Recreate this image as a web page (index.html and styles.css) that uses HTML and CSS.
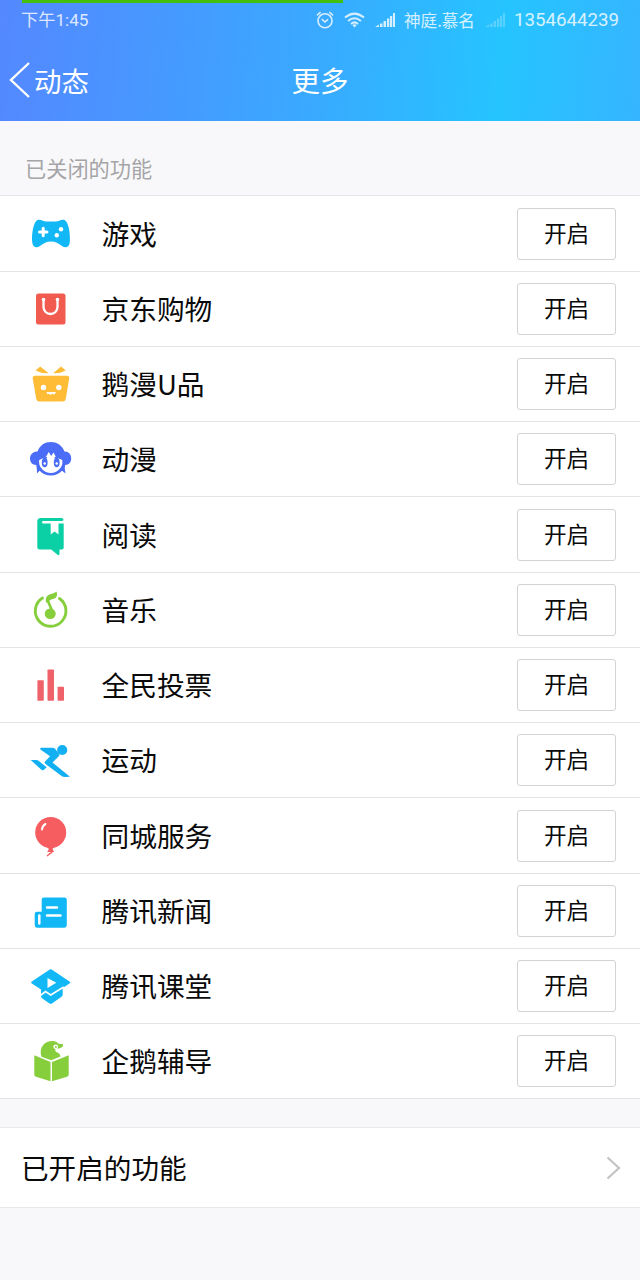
FILE: index.html
```html
<!DOCTYPE html>
<html lang="zh-CN">
<head>
    <meta charset="UTF-8">
    <meta name="viewport" content="width=device-width, initial-scale=1.0">
    <title>更多</title>
    <link rel="stylesheet" href="styles.css">
</head>

<body>
    <header class="header">
        <div class="progress"></div>
        <div class="status">
            <span class="time">下午1:45</span>
            <svg class="alarm" viewBox="0 0 18 18" fill="none" stroke="#fff" stroke-width="1.6">
                <circle cx="9" cy="9.8" r="7"/>
                <path d="M5.8 8.2L9 11l3-2.6M1 4.3L4.6 1.2M17 4.3l-3.6-3.1"/>
            </svg>
            <svg class="wifi" viewBox="0 0 21 16" fill="none" stroke="#fff" stroke-width="2">
                <path d="M1 5.6q9.500-8 19 0M4.100 8.900q6.400-5.400 12.800 0M7 11.900q3.500-3 7 0"/>
                <path d="M8.300 13q2.200-1.600 4.400 0l-2.200 2.400z" fill="#fff" stroke="none"/>
            </svg>
            <svg class="signal" viewBox="0 0 20 15" fill="#fff">
                <path d="M0 14l4-2.500V14zM5 10.500h2.500V14H5zM8.500 8H11v6H8.500zM12 5.500h2.300V14H12zM15 3h2.200v11H15zM18 0h2v14h-2z"/>
            </svg>
            <span class="carrier">神庭.慕名</span>
            <svg class="signal weak" viewBox="0 0 20 15" fill="#fff">
                <path d="M0 14l4-2.500V14zM5 10.500h2.500V14H5zM8.500 8H11v6H8.500zM12 5.500h2.300V14H12zM15 3h2.200v11H15zM18 0h2v14h-2z"/>
            </svg>
            <span class="number">1354644239</span>
        </div>
        <nav class="nav">
            <a class="back">
                <svg viewBox="0 0 22 36" fill="none" stroke="#fff" stroke-width="2.400"><path d="M20 1L2 18l18 17"/></svg>
                <span>动态</span>
            </a>
            <h1>更多</h1>
        </nav>
    </header>

    <h2 class="caption">已关闭的功能</h2>

    <ul class="list">
        <li>
            <svg class="icon" viewBox="0 0 50 50">
                <path fill="#12b7f5" d="M12 10.800c3-.8 5.500 1.700 8 1.700h10c2.500 0 5-2.500 8-1.700 4.500 1.200 6.500 14 5.800 22.500-.5 5-4.300 6.300-7.800 3.700-3.500-2.700-6.500-4.500-11-4.500s-7.500 1.800-11 4.500c-3.500 2.600-7.300 1.300-7.800-3.700-.8-8.500 1.300-21.300 5.800-22.500z"/>
                <path stroke="#fff" stroke-width="3" stroke-linecap="round" d="M13.500 23h7.500M17.200 19.200v7.600"/>
                <circle cx="35" cy="20.300" r="2.200" fill="#fff"/>
                <circle cx="30.800" cy="26.300" r="2.200" fill="#fff"/>
            </svg>
            <span class="name">游戏</span>
            <button>开启</button>
        </li>
        <li>
            <svg class="icon" viewBox="0 0 50 50">
                <rect x="10" y="9.500" width="29.500" height="31" rx="2.500" fill="#f15b50"/>
                <path fill="none" stroke="#fff" stroke-width="2.300" d="M17.500 15.500v7.500a7 7 0 0 0 14 0v-7.500"/>
                <circle cx="17.500" cy="15.500" r="1.800" fill="#fff"/>
                <circle cx="31.500" cy="15.500" r="1.800" fill="#fff"/>
            </svg>
            <span class="name">京东购物</span>
            <button>开启</button>
        </li>
        <li>
            <svg class="icon" viewBox="0 0 50 50">
                <path fill="#ffbc37" d="M9 16.800h32q2.500 0 2.200 2.500l-3.400 20.500q-.5 2.700-3 2.700H13.200q-2.500 0-3-2.700L6.700 19.300q-.3-2.500 2.300-2.500z"/>
                <path fill="#ffbc37" d="M9.500 11.500l4.700-4 8.500 6.700-6.500-.2zM39.800 11.500l-4.700-4-8 6.700 6.500-.2z"/>
                <circle cx="17.500" cy="28.500" r="2.700" fill="#fff"/>
                <circle cx="32.800" cy="28.500" r="2.700" fill="#fff"/>
                <path fill="#fff" d="M20.500 33h9.500l-1.500 2.500-2.500-.8-1.300 1.300-1.700-1.300-1.500.6z"/>
            </svg>
            <span class="name">鹅漫U品</span>
            <button>开启</button>
        </li>
        <li>
            <svg class="icon" viewBox="0 0 50 50">
                <path fill="#4a6cf7" d="M11.500 17.500C14 11 19 8 24.800 8S36 11 38.500 17.500c4-.3 6.700 2.700 6.700 7 0 3.700-2.500 6.500-6 6.500l-.5 3 .8 5.500-3.500-2.700c-2.800 3.200-6.600 4.700-11.200 4.700s-8.300-1.500-11.200-4.700L11 39.500l-.2-5-.6-3.500c-3.700 0-6.200-2.800-6.200-6.500 0-4.300 3.500-7.300 7.500-7z"/>
                <path fill="#fff" d="M13.200 26l7-3.500 2.500-4.500 2.500 4 2.300-3.500 2.500 4.500 6.200 3q1 5.500-2.700 9-3.500 3.800-8.500 4-5.500-.2-9-4-3.700-4-2.800-9z"/>
                <ellipse cx="18.700" cy="28.500" rx="2.900" ry="4.700" fill="#4a6cf7"/>
                <ellipse cx="30.700" cy="28.500" rx="2.900" ry="4.700" fill="#4a6cf7"/>
                <circle cx="18.700" cy="29.500" r="1.200" fill="#fff"/>
                <circle cx="30.700" cy="29.500" r="1.200" fill="#fff"/>
                <path fill="none" stroke="#4a6cf7" stroke-width="1.200" d="M15 24.300q3-2.300 6-.3M28.500 24q3-2 6 .3"/>
            </svg>
            <span class="name">动漫</span>
            <button>开启</button>
        </li>
        <li>
            <svg class="icon" viewBox="0 0 50 50">
                <path fill="#0bd0a5" d="M14.500 8h21q2 0 2 1.500t-2 1.500h-18q-1.500 0-1.500 1.300t1.500 1.200h20.200v24.300q0 1.700-1.700 1.700h-2.500v4q0 2.500-2 1.300l-6.300-5.300H14q-2.700 0-2.700-2.500V11.500q0-3.500 3.200-3.500z"/>
                <path fill="#fff" d="M24.700 13h7.800v11.500l-3.900-3-3.900 3z"/>
            </svg>
            <span class="name">阅读</span>
            <button>开启</button>
        </li>
        <li>
            <svg class="icon" viewBox="0 0 50 50">
                <path fill="none" stroke="#86ce3c" stroke-width="2.900" stroke-linecap="round" d="M16.500 13a15.300 15.300 0 1 0 17 .5"/>
                <path fill="none" stroke="#86ce3c" stroke-width="2.700" d="M21.500 15l6 14"/>
                <path fill="#86ce3c" d="M20 17.500c-1.300-6 2.500-8 6-8.700 3-.8 4.500-2.300 4.500-2.300s2.300 5.500-2.500 7.200c-3 1-5 1-4.700 3z"/>
                <ellipse cx="24.200" cy="28.800" rx="5.500" ry="5.200" fill="#86ce3c"/>
            </svg>
            <span class="name">音乐</span>
            <button>开启</button>
        </li>
        <li>
            <svg class="icon" viewBox="0 0 50 50" fill="#f0626a">
                <rect x="11.400" y="20.300" width="6.400" height="20.500" rx=".7"/>
                <rect x="21.500" y="9.500" width="6.500" height="31.300" rx=".7"/>
                <rect x="31.600" y="26.700" width="6.400" height="14.100" rx=".7"/>
            </svg>
            <span class="name">全民投票</span>
            <button>开启</button>
        </li>
        <li>
            <svg class="icon" viewBox="0 0 50 50" fill="#12b0f3">
                <circle cx="36.200" cy="15" r="5.100"/>
                <path d="M15.500 12.700h11q1.500 0 2.600 1l3.900 5q1 1.300 0 2.400l-6.500 6.400 17.500 14.300-5.500.3q-1.300 0-2.500-.8L19.500 29q-1.600-1.400-.2-2.800l4.700-5-9.600-6.800q-.8-1.500 1.100-1.700z"/>
                <path d="M4.700 25h5.800q1 0 2 .8l8.200 6.400-2.700 2.500q-1.300 1-2.600.1z"/>
            </svg>
            <span class="name">运动</span>
            <button>开启</button>
        </li>
        <li>
            <svg class="icon" viewBox="0 0 50 50">
                <ellipse cx="24.700" cy="21.500" rx="15.500" ry="15.500" fill="#f55d60"/>
                <path fill="#f55d60" d="M20 35h9.500l-3 3 1.700 3h-7l1.700-3z"/>
                <path fill="none" stroke="#f55d60" stroke-width="1.500" stroke-linecap="round" d="M25.500 40c1.500 2.500-2.500 2.300-4 4.700"/>
                <path fill="none" stroke="#fff" stroke-width="2" stroke-linecap="round" d="M16 18.500q.5-4 3.500-5.500"/>
            </svg>
            <span class="name">同城服务</span>
            <button>开启</button>
        </li>
        <li>
            <svg class="icon" viewBox="0 0 50 50">
                <path fill="#12b7f5" d="M18 11.500h20.500q2.300 0 2.300 2.300v25.500q0 2.400-2.300 2.400H11q-2.300 0-2.300-2.400V28q0-2.300 2.300-2.300h4.700V13.800q0-2.300 2.300-2.300z"/>
                <path fill="none" stroke="#fff" stroke-width="2.500" stroke-linecap="round" d="M21 21.400h10M21 29.400h13.500M13.300 29.500v8"/>
            </svg>
            <span class="name">腾讯新闻</span>
            <button>开启</button>
        </li>
        <li>
            <svg class="icon" viewBox="0 0 50 50">
                <path fill="#12b7f5" d="M23 8.900q1.700-1.200 3.400 0L43.500 20.500q1.500 1 0 2L36.700 27v6.500q0 1.500-1.200 2.300l-9.200 6.500q-1.600 1-3.200 0l-7-5q-1.100-.8-1.100-2.300v-6.500l-9.200-6q-1.500-1 0-2z"/>
                <path fill="none" stroke="#fff" stroke-width="1.700" d="M13 35.500l6.500-5 5.200 3.500 13-8"/>
                <path fill="#fff" d="M21.500 17l8.800 4.700-8.800 5.300z"/>
            </svg>
            <span class="name">腾讯课堂</span>
            <button>开启</button>
        </li>
        <li>
            <svg class="icon" viewBox="0 0 50 50">
                <path fill="#86ce3c" d="M8.300 19.300L24.500 26v19.200L10 40.700q-1.700-.5-1.700-2.200zM42.700 19.300L26 26v19.200l15-4.500q1.700-.5 1.700-2.200z"/>
                <path fill="#86ce3c" d="M15.500 20.800C12.500 11.500 18.500 5 26 5c3.500 0 5.500 1.200 6.500 2.700l4.500.6c.7 3-2.500 4-5.500 4.300-2 .5-3 1.500-2 2.700 1.200 1.500 4.500 1.500 5 5.200L25.200 24.200z"/>
                <circle cx="29.700" cy="10.800" r="2.400" fill="#fff"/>
                <circle cx="29.900" cy="11" r="1" fill="#86ce3c"/>
            </svg>
            <span class="name">企鹅辅导</span>
            <button>开启</button>
        </li>
    </ul>

    <a class="opened">
        <span>已开启的功能</span>
        <svg viewBox="0 0 15 24" fill="none" stroke="#c3c3c5" stroke-width="2.200"><path d="M1.500 1.500L13 12 1.500 22.500"/></svg>
    </a>
</body>
</html>
```

FILE: styles.css
```css
* {
    box-sizing: border-box;
}

body {
    margin: 0;
    min-height: 100vh;
    background-color: #f8f8fa;
    color: #0a0a0a;
    font-family: "Noto Sans CJK SC", sans-serif;
}

h1, h2, ul {
    margin: 0;
    padding: 0;
    font-weight: 400;
}

.header {
    height: 121px;
    color: white;
    background: linear-gradient(95deg, #5488ff 0%, #459aff 28%, #39aaff 50%, #25c4ff 78%, #36b5ff 100%);
}

.progress {
    width: 321px;
    height: 3px;
    margin-left: 22px;
    background-color: #43bf0c;
}

.status {
    height: 34px;
    display: flex;
    align-items: center;
    padding: 0 21px;
    line-height: 34px;
    opacity: 0.8;
}

.time {
    font-family: Roboto, "Noto Sans CJK SC", sans-serif;
    font-size: 17.2px;
    margin-right: auto;
}

.alarm {
    width: 18px;
    height: 18px;
    margin-right: 10px;
}

.wifi {
    width: 21px;
    height: 16px;
    margin-right: 10px;
}

.signal {
    width: 20px;
    height: 15px;
    margin-right: 9px;
}

.weak {
    opacity: 0.3;
    margin-left: 10px;
}

.carrier {
    font-size: 16.6px;
}

.number {
    font-family: Roboto, "Noto Sans CJK SC", sans-serif;
    font-size: 18.7px;
}

.nav {
    height: 84px;
    display: grid;
    grid-template-columns: 1fr auto 1fr;
    align-items: center;
    padding: 0 9px;
}

.nav h1 {
    font-size: 28.5px;
    line-height: 84px;
    padding-top: 1px;
}

.back {
    display: flex;
    align-items: center;
    gap: 3px;
    font-size: 27.5px;
    line-height: 84px;
}

.back svg {
    width: 22px;
    height: 36px;
}

.caption {
    height: 75.4px;
    padding: 25px 0 0 25px;
    border-bottom: 1px solid #e5e5e7;
    color: #a5a5a7;
    font-size: 21.2px;
    line-height: 44px;
}

.list {
    list-style: none;
}

.list li {
    height: 75.25px;
    display: flex;
    align-items: center;
    padding: 0 24px 0 26px;
    background-color: white;
    border-bottom: 1px solid #e3e3e5;
}

.icon {
    width: 50px;
    height: 50px;
}

.name {
    flex: 1;
    margin-left: 25.5px;
    padding-bottom: 2px;
    font-size: 27.7px;
}

.list button {
    width: 99px;
    height: 52px;
    padding: 0 0 2px;
    border: 1px solid #d3d3d5;
    border-radius: 3px;
    background-color: white;
    color: #0a0a0a;
    font-family: inherit;
    font-size: 22.6px;
    line-height: 48px;
}

.opened {
    height: 81px;
    margin-top: 28px;
    display: flex;
    align-items: center;
    justify-content: space-between;
    padding: 0 19px 0 21px;
    background-color: white;
    border-top: 1px solid #e8e8ea;
    border-bottom: 1px solid #e8e8ea;
    font-size: 27.6px;
}

.opened span {
    padding-bottom: 2px;
}

.opened svg {
    width: 15px;
    height: 24px;
}
```
